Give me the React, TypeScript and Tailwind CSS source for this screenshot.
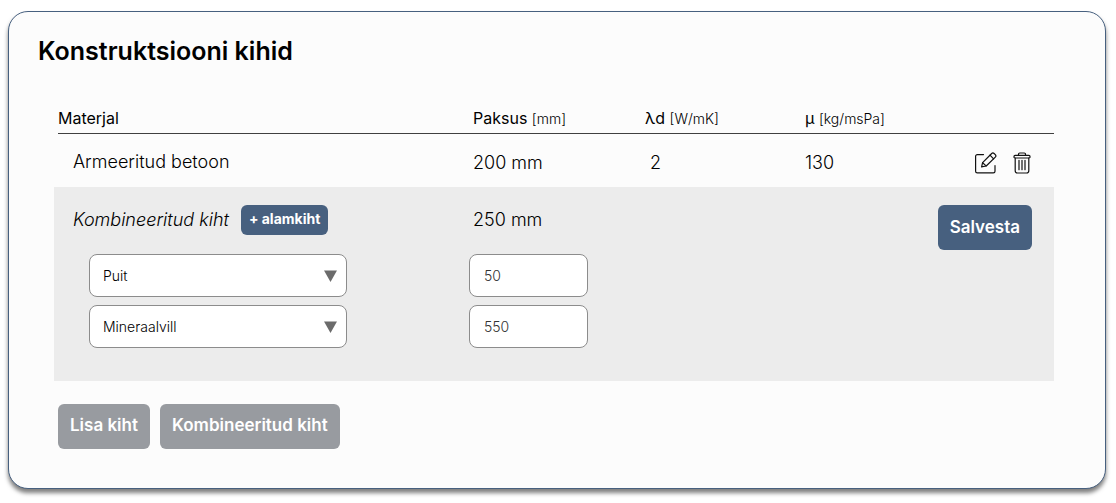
import { useState } from 'react';

type Sublayer = { id: string; material: string; thickness: string };

const MATERIALS = ['Puit', 'Mineraalvill', 'Armeeritud betoon'];

const COLUMNS = [
  { label: 'Paksus', unit: '[mm]' },
  { label: 'λd', unit: '[W/mK]' },
  { label: 'μ', unit: '[kg/msPa]' },
];

function EditIcon() {
  return (
    <svg
      aria-hidden="true"
      width="22"
      height="22"
      viewBox="0 0 22 22"
      fill="none"
      stroke="#111111"
      strokeWidth="1.2"
      strokeLinecap="round"
      strokeLinejoin="round"
    >
      <path d="M8.500 2.600H2.300A1.700 1.700 0 0 0 .6 4.300v14.900a1.700 1.700 0 0 0 1.700 1.700h16a1.700 1.700 0 0 0 1.700-1.700V13.500" />
      <path d="M6.600 14.800l1-4.200 9.100-9.100a1.700 1.700 0 0 1 2.400 0l1.200 1.200a1.700 1.700 0 0 1 0 2.400L11.200 14l-4.600.8z" />
      <path d="M15 3.200l3.600 3.600M7.600 10.700l3.500 3.200" />
    </svg>
  );
}

function TrashIcon() {
  return (
    <svg
      aria-hidden="true"
      width="18"
      height="22"
      viewBox="0 0 18 22"
      fill="none"
      stroke="#111111"
      strokeWidth="1.2"
      strokeLinecap="round"
      strokeLinejoin="round"
    >
      <path d="M5.500 3.200V2.200A1.200 1.200 0 0 1 6.700 1h4.600a1.200 1.200 0 0 1 1.200 1.200v1" />
      <rect x="1" y="3.300" width="16" height="2.700" rx="1.100" />
      <path d="M2.200 6v12.800A2.200 2.200 0 0 0 4.400 21h9.200a2.200 2.200 0 0 0 2.200-2.200V6" />
      <path d="M6 8.300v9.400M9 8.300v9.400M12 8.300v9.400" />
    </svg>
  );
}

export default function App() {
  const [sublayers, setSublayers] = useState<Sublayer[]>([
    { id: 'a', material: 'Puit', thickness: '50' },
    { id: 'b', material: 'Mineraalvill', thickness: '550' },
  ]);

  const update = (id: string, change: Partial<Sublayer>) =>
    setSublayers((rows) => rows.map((row) => (row.id === id ? { ...row, ...change } : row)));

  return (
    <main className="bg-white pt-[11px] pr-[10px] pb-[14px] pl-2 font-['Inter',sans-serif] text-black">
      <section className="rounded-[20px] border border-[#47607f] bg-[#fcfcfc] pt-[23px] pr-[51px] pb-[39px] pl-[45px] shadow-[0_4px_4px_rgba(0,0,0,0.5)]">
        <h1 className="-ml-4 text-[25px] leading-8 font-semibold">Konstruktsiooni kihid</h1>

        <table className="mt-[37px] w-full table-fixed border-collapse text-left">
          <colgroup>
            <col className="w-[41.5%]" />
            <col className="w-[17.2%]" />
            <col className="w-[16%]" />
            <col className="w-[13%]" />
            <col />
          </colgroup>
          <thead>
            <tr>
              <th scope="col" className="p-0 pl-1 text-base font-normal">
                <div className="h-[30px] border-b border-[#404040] leading-7">Materjal</div>
              </th>
              {COLUMNS.map((column) => (
                <th key={column.label} scope="col" className="p-0 text-base font-normal">
                  <div className="h-[30px] border-b border-[#404040] pl-1 leading-7 whitespace-nowrap">
                    {column.label} <span className="text-sm leading-none font-light">{column.unit}</span>
                  </div>
                </th>
              ))}
              <td className="p-0">
                <div className="h-[30px] border-b border-[#404040]" />
              </td>
            </tr>
          </thead>
          <tbody className="text-lg leading-6 font-light">
            <tr className="h-[53px] align-top">
              <td className="p-0 pt-4 pl-[19px]">Armeeritud betoon</td>
              <td className="p-0 pt-[17px] pl-1">200 mm</td>
              <td className="p-0 pt-[17px] pl-[9px]">2</td>
              <td className="p-0 pt-[17px] pl-1">130</td>
              <td className="p-0 pt-[18px] pr-[23px]">
                <div className="flex items-center justify-end gap-4">
                  <button type="button" aria-label="Muuda">
                    <EditIcon />
                  </button>
                  <button type="button" aria-label="Kustuta">
                    <TrashIcon />
                  </button>
                </div>
              </td>
            </tr>
          </tbody>
          <tbody className="bg-[#ececec] text-lg leading-6 font-light">
            <tr className="h-[67px] align-top">
              <td className="p-0 pt-[18px] pl-[19px]">
                <div className="flex items-center gap-3">
                  <em>Kombineeritud kiht</em>
                  <button
                    type="button"
                    className="h-[30px] rounded-md bg-[#47607f] px-2 pb-[2px] text-sm leading-5 font-bold text-white"
                  >
                    + alamkiht
                  </button>
                </div>
              </td>
              <td className="p-0 pt-[21px] pl-1">250 mm</td>
              <td />
              <td />
              <td rowSpan={3} className="p-0 pt-[18px] pr-[22px] text-right">
                <button
                  type="button"
                  className="h-[45px] rounded-md bg-[#47607f] px-3 pb-px text-[17px] font-semibold text-white"
                >
                  Salvesta
                </button>
              </td>
            </tr>
            {sublayers.map((row, index) => (
              <tr key={row.id} className="align-top">
                <td className={index === sublayers.length - 1 ? 'p-0 pb-[33px] pl-[35px]' : 'p-0 pb-2 pl-[35px]'}>
                  <div className="relative w-[258px]">
                    <select
                      aria-label="Materjal"
                      value={row.material}
                      onChange={(event) => update(row.id, { material: event.target.value })}
                      className="block h-[43px] w-full appearance-none rounded-lg border border-[#8c8c8c] bg-white pr-8 pl-[13px] text-sm"
                    >
                      {MATERIALS.map((material) => (
                        <option key={material}>{material}</option>
                      ))}
                    </select>
                    <svg
                      aria-hidden="true"
                      className="pointer-events-none absolute top-4 right-[10px]"
                      width="13"
                      height="12"
                      viewBox="0 0 13 12"
                    >
                      <path d="M0 0.500h13L6.500 12z" fill="#6b6b6b" />
                    </svg>
                  </div>
                </td>
                <td className="p-0">
                  <input
                    type="text"
                    inputMode="numeric"
                    aria-label="Paksus mm"
                    value={row.thickness}
                    onChange={(event) => update(row.id, { thickness: event.target.value })}
                    className="block h-[43px] w-[119px] rounded-lg border border-[#8c8c8c] bg-white px-[14px] text-sm text-[#333333]"
                  />
                </td>
                <td />
                <td />
              </tr>
            ))}
          </tbody>
        </table>

        <div className="mt-[23px] flex gap-[10px] pl-1">
          <button
            type="button"
            className="h-[45px] rounded-md bg-[#989ba0] px-3 pb-px text-[17px] font-semibold text-white"
          >
            Lisa kiht
          </button>
          <button
            type="button"
            className="h-[45px] rounded-md bg-[#989ba0] px-3 pb-px text-[17px] font-semibold text-white"
          >
            Kombineeritud kiht
          </button>
        </div>
      </section>
    </main>
  );
}
